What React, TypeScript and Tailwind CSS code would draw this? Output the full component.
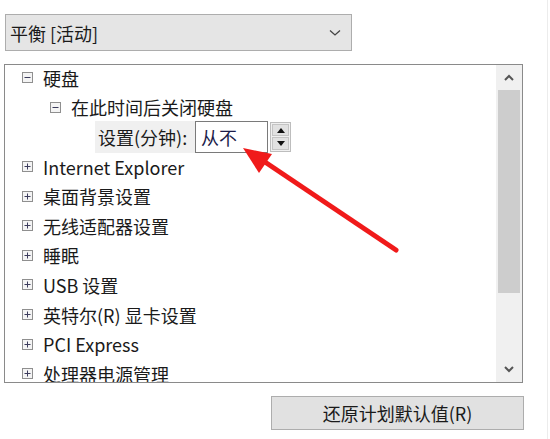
import React from 'react'

const font = { fontFamily: '"Noto Sans CJK SC", "Noto Sans", sans-serif' }

function TreeBox({ open }: { open: boolean }) {
  return (
    <svg width="11" height="11" viewBox="0 0 11 11" className="shrink-0">
      <rect x="0.5" y="0.5" width="10" height="10" fill="#f4f4f4" stroke="#8f8f8f" />
      <line x1="2.5" y1="5.5" x2="8.5" y2="5.5" stroke="#3b3b5c" strokeWidth="1" />
      {!open && <line x1="5.5" y1="2.5" x2="5.5" y2="8.5" stroke="#3b3b5c" strokeWidth="1" />}
    </svg>
  )
}

const collapsed = [
  'Internet Explorer',
  '桌面背景设置',
  '无线适配器设置',
  '睡眠',
  'USB 设置',
  '英特尔(R) 显卡设置',
  'PCI Express',
  '处理器电源管理',
]

function Row({ indent, children }: { indent: number; children: React.ReactNode }) {
  return (
    <div className="h-[29.6px] flex items-center gap-[10px]" style={{ paddingLeft: indent }}>
      {children}
    </div>
  )
}

export default function App() {
  return (
    <div className="w-[550px] h-[439px] bg-white relative overflow-hidden text-[18px] leading-none text-[#1a1a1a]" style={font}>
      {/* plan dropdown */}
      <div className="pt-[14px] pl-[5px]">
        <div className="w-[347px] h-[37px] border border-[#adadad] bg-[#e5e5e5] flex items-center justify-between pl-[4px] pr-[10px]">
          <span>平衡 [活动]</span>
          <svg width="12" height="8" viewBox="0 0 12 8">
            <path d="M1 1.5 L6 6 L11 1.5" fill="none" stroke="#444" strokeWidth="1.3" />
          </svg>
        </div>
      </div>

      {/* settings tree */}
      <div className="mt-[13px] ml-[4px] w-[519px] h-[319px] border border-[#8a8a8a] flex">
        <div className="flex-1 overflow-hidden">
          <div className="-mt-[2px]">
            <Row indent={17}>
              <TreeBox open />
              <span>硬盘</span>
            </Row>
            <Row indent={45}>
              <TreeBox open />
              <span>在此时间后关闭硬盘</span>
            </Row>
            <div className="h-[29.6px] flex items-center pl-[90px]">
              <div className="h-[32px] w-[100px] bg-[#f0f0f0] flex items-center pl-[3px]">设置(分钟):</div>
              <div className="h-[32px] w-[73px] border border-[#7a7a7a] bg-white flex items-center pl-[5px] text-[#1c1c4a]">
                从不
              </div>
              <div className="ml-[2px] w-[21px] h-[30px] border border-[#bdbdbd] bg-[#f0f0f0] flex flex-col gap-[1px] p-[1px]">
                <div className="flex-1 bg-[#e1e1e1] border border-[#c4c4c4] flex items-center justify-center">
                  <svg width="8" height="5" viewBox="0 0 8 5"><path d="M0 5 L4 0 L8 5 Z" fill="#111" /></svg>
                </div>
                <div className="flex-1 bg-[#e1e1e1] border border-[#c4c4c4] flex items-center justify-center">
                  <svg width="8" height="5" viewBox="0 0 8 5"><path d="M0 0 L4 5 L8 0 Z" fill="#111" /></svg>
                </div>
              </div>
            </div>
            {collapsed.map((t) => (
              <Row key={t} indent={17}>
                <TreeBox open={false} />
                <span>{t}</span>
              </Row>
            ))}
          </div>
        </div>
        {/* scrollbar */}
        <div className="w-[26px] bg-[#f0f0f0] flex flex-col px-[1px]">
          <div className="h-[25px] flex items-center justify-center">
            <svg width="10" height="7" viewBox="0 0 10 7"><path d="M1 6 L5 2 L9 6" fill="none" stroke="#555" strokeWidth="2" /></svg>
          </div>
          <div className="h-[203px] bg-[#cdcdcd] mx-[1px]" />
          <div className="flex-1" />
          <div className="h-[25px] flex items-center justify-center">
            <svg width="10" height="7" viewBox="0 0 10 7"><path d="M1 1 L5 5 L9 1" fill="none" stroke="#555" strokeWidth="2" /></svg>
          </div>
        </div>
      </div>

      {/* restore button */}
      <div className="mt-[13px] ml-[271px] w-[253px] h-[34px] border border-[#adadad] bg-[#e1e1e1] flex items-center justify-center">
        还原计划默认值(R)
      </div>

      <div className="absolute top-0 right-[2px] w-px h-full bg-[#ececec]" />

      {/* red annotation arrow */}
      <svg className="absolute left-0 top-0 pointer-events-none" width="550" height="439">
        <line x1="396" y1="250" x2="262" y2="160" stroke="#f01a1a" strokeWidth="5" strokeLinecap="round" />
        <polygon points="243,148 272,154 259,173" fill="#f01a1a" />
      </svg>
    </div>
  )
}
